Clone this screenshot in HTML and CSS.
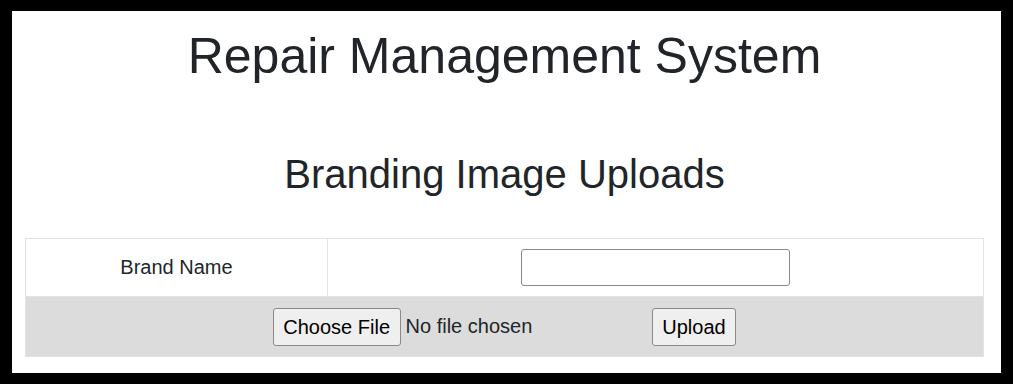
FILE: index.html
```html
<!DOCTYPE html>
<html lang="en">

<head>
    <meta charset="UTF-8" />
    <meta name="viewport" content="width=device-width, initial-scale=1.0" />
    <title>Repair Management System</title>
    <link rel="stylesheet" href="styles.css">
</head>

<body>
    <div class="page">
        <h1>Repair Management System</h1>
        <h2>Branding Image Uploads</h2>
        <form id="brandForm">
            <table class="brand-table">
                <tr>
                    <td class="label-cell">Brand Name</td>
                    <td><input type="text" id="brandName" class="text-input" /></td>
                </tr>
                <tr class="upload-row">
                    <td colspan="2">
                        <div class="upload-line">
                            <label class="file-pick">
                                <span class="btn">Choose File</span>
                                <span class="file-name">No file chosen</span>
                                <input type="file" id="brandImage" hidden />
                            </label>
                            <button type="button" class="btn">Upload</button>
                        </div>
                    </td>
                </tr>
            </table>
        </form>
    </div>
</body>

</html>
```

FILE: styles.css
```css
html,
body {
    margin: 0;
    height: 100%;
}

body {
    background: #000;
    padding: 11px 12px;
    box-sizing: border-box;
    font-family: "Liberation Sans", Arial, sans-serif;
    color: #212529;
}

.page {
    background: #fff;
    height: 362px;
    padding: 0 17px 0 13px;
    overflow: hidden;
}

h1 {
    margin: 16px 0 0;
    font-size: 50px;
    line-height: 58px;
    font-weight: 400;
    text-align: center;
}

h2 {
    margin: 66px 0 0;
    font-size: 40px;
    line-height: 46px;
    font-weight: 400;
    text-align: center;
}

.brand-table {
    margin-top: 41px;
    width: 100%;
    border-collapse: collapse;
    font-size: 20px;
    line-height: 23px;
}

.brand-table td {
    border: 1px solid #e3e3e3;
    padding: 0;
    text-align: center;
    vertical-align: middle;
}

.brand-table tr:first-child td {
    height: 57px;
}

.label-cell {
    width: 301px;
}

.upload-row td {
    background: #dcdcdc;
    height: 59px;
}

.text-input {
    display: block;
    margin: 0 auto;
    width: 269px;
    height: 37px;
    box-sizing: border-box;
    border: 1px solid #8a8a8a;
    border-radius: 3px;
    font: inherit;
}

.upload-line {
    display: flex;
    justify-content: center;
    align-items: center;
}

.file-pick {
    display: flex;
    align-items: center;
    gap: 5px;
    width: 379px;
}

.btn {
    display: inline-block;
    box-sizing: border-box;
    height: 38px;
    padding: 0 9.5px;
    background: #efefef;
    border: 1px solid #8a8a8a;
    border-radius: 3px;
    font: inherit;
    font-size: 20px;
    line-height: 36px;
    color: #000;
}

.file-name {
    color: #212529;
}
```
